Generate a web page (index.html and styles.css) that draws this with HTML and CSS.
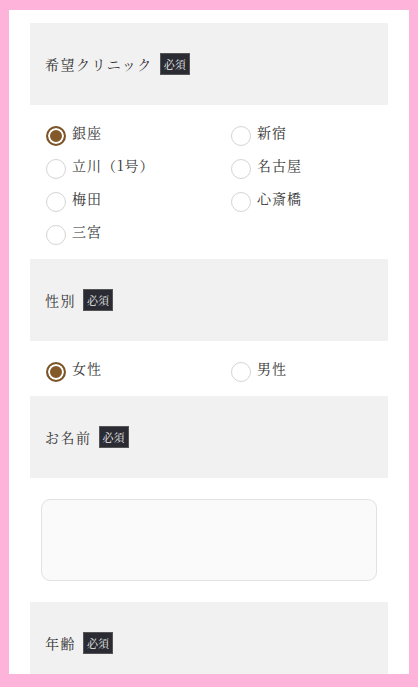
FILE: index.html
```html
<!DOCTYPE html>
<html lang="ja">
<head>
    <meta charset="utf-8">
    <title>ご予約フォーム</title>
    <link rel="stylesheet" href="styles.css">
</head>
<body>
    <div class="frame">
        <form class="entry-form">
            <div class="field-head">
                <span class="field-title">希望クリニック</span>
                <span class="required">必須</span>
            </div>
            <div class="choices">
                <label class="choice"><input type="radio" name="clinic" checked><span class="dot"></span>銀座</label>
                <label class="choice"><input type="radio" name="clinic"><span class="dot"></span>新宿</label>
                <label class="choice"><input type="radio" name="clinic"><span class="dot"></span>立川（1号）</label>
                <label class="choice"><input type="radio" name="clinic"><span class="dot"></span>名古屋</label>
                <label class="choice"><input type="radio" name="clinic"><span class="dot"></span>梅田</label>
                <label class="choice"><input type="radio" name="clinic"><span class="dot"></span>心斎橋</label>
                <label class="choice"><input type="radio" name="clinic"><span class="dot"></span>三宮</label>
            </div>

            <div class="field-head">
                <span class="field-title">性別</span>
                <span class="required">必須</span>
            </div>
            <div class="choices">
                <label class="choice"><input type="radio" name="sex" checked><span class="dot"></span>女性</label>
                <label class="choice"><input type="radio" name="sex"><span class="dot"></span>男性</label>
            </div>

            <div class="field-head">
                <span class="field-title">お名前</span>
                <span class="required">必須</span>
            </div>
            <div class="text-wrap">
                <input type="text" name="name" class="text-input">
            </div>

            <div class="field-head">
                <span class="field-title">年齢</span>
                <span class="required">必須</span>
            </div>
        </form>
    </div>
</body>
</html>
```

FILE: styles.css
```css
html, body {
    margin: 0;
    height: 100%;
    overflow: hidden;
}
body {
    background-color: #feb4da;
    font-family: "Noto Serif CJK JP", "Noto Sans CJK JP", serif;
    color: #333;
}
.frame {
    margin: 10px 9px 0 9px;
    height: 664px;
    background-color: #fff;
    padding: 13px 21px 0 21px;
    box-sizing: border-box;
    overflow: hidden;
}
.field-head {
    height: 82px;
    background-color: #f1f1f1;
    display: flex;
    align-items: center;
    padding-left: 15px;
}
.field-title {
    font-size: 14px;
    letter-spacing: 1.5px;
    margin-right: 7px;
    color: #333;
}
.required {
    background-color: #2a2b33;
    color: #eee;
    font-size: 11px;
    line-height: 14px;
    padding: 3px 3px;
    border: 1px solid #555;
}
.choices {
    display: grid;
    grid-template-columns: 185px 1fr;
    padding: 10px 0 12px 16px;
}
.choice {
    display: flex;
    align-items: center;
    height: 33px;
    font-size: 14px;
    letter-spacing: 1px;
    cursor: pointer;
}
.choice input {
    display: none;
}
.dot {
    width: 20px;
    height: 20px;
    border: 1px solid #d4d4d4;
    border-radius: 50%;
    box-sizing: border-box;
    margin-right: 6px;
    position: relative;
    top: 4px;
}
.choice input:checked + .dot {
    border: 2px solid #7d5427;
    background-color: #84592a;
    box-shadow: inset 0 0 0 2px #fff;
}
.text-wrap {
    padding: 21px 11px;
}
.text-input {
    display: block;
    width: 100%;
    height: 82px;
    box-sizing: border-box;
    border: 1px solid #e2e2e2;
    border-radius: 9px;
    background-color: #fafafa;
}
```
